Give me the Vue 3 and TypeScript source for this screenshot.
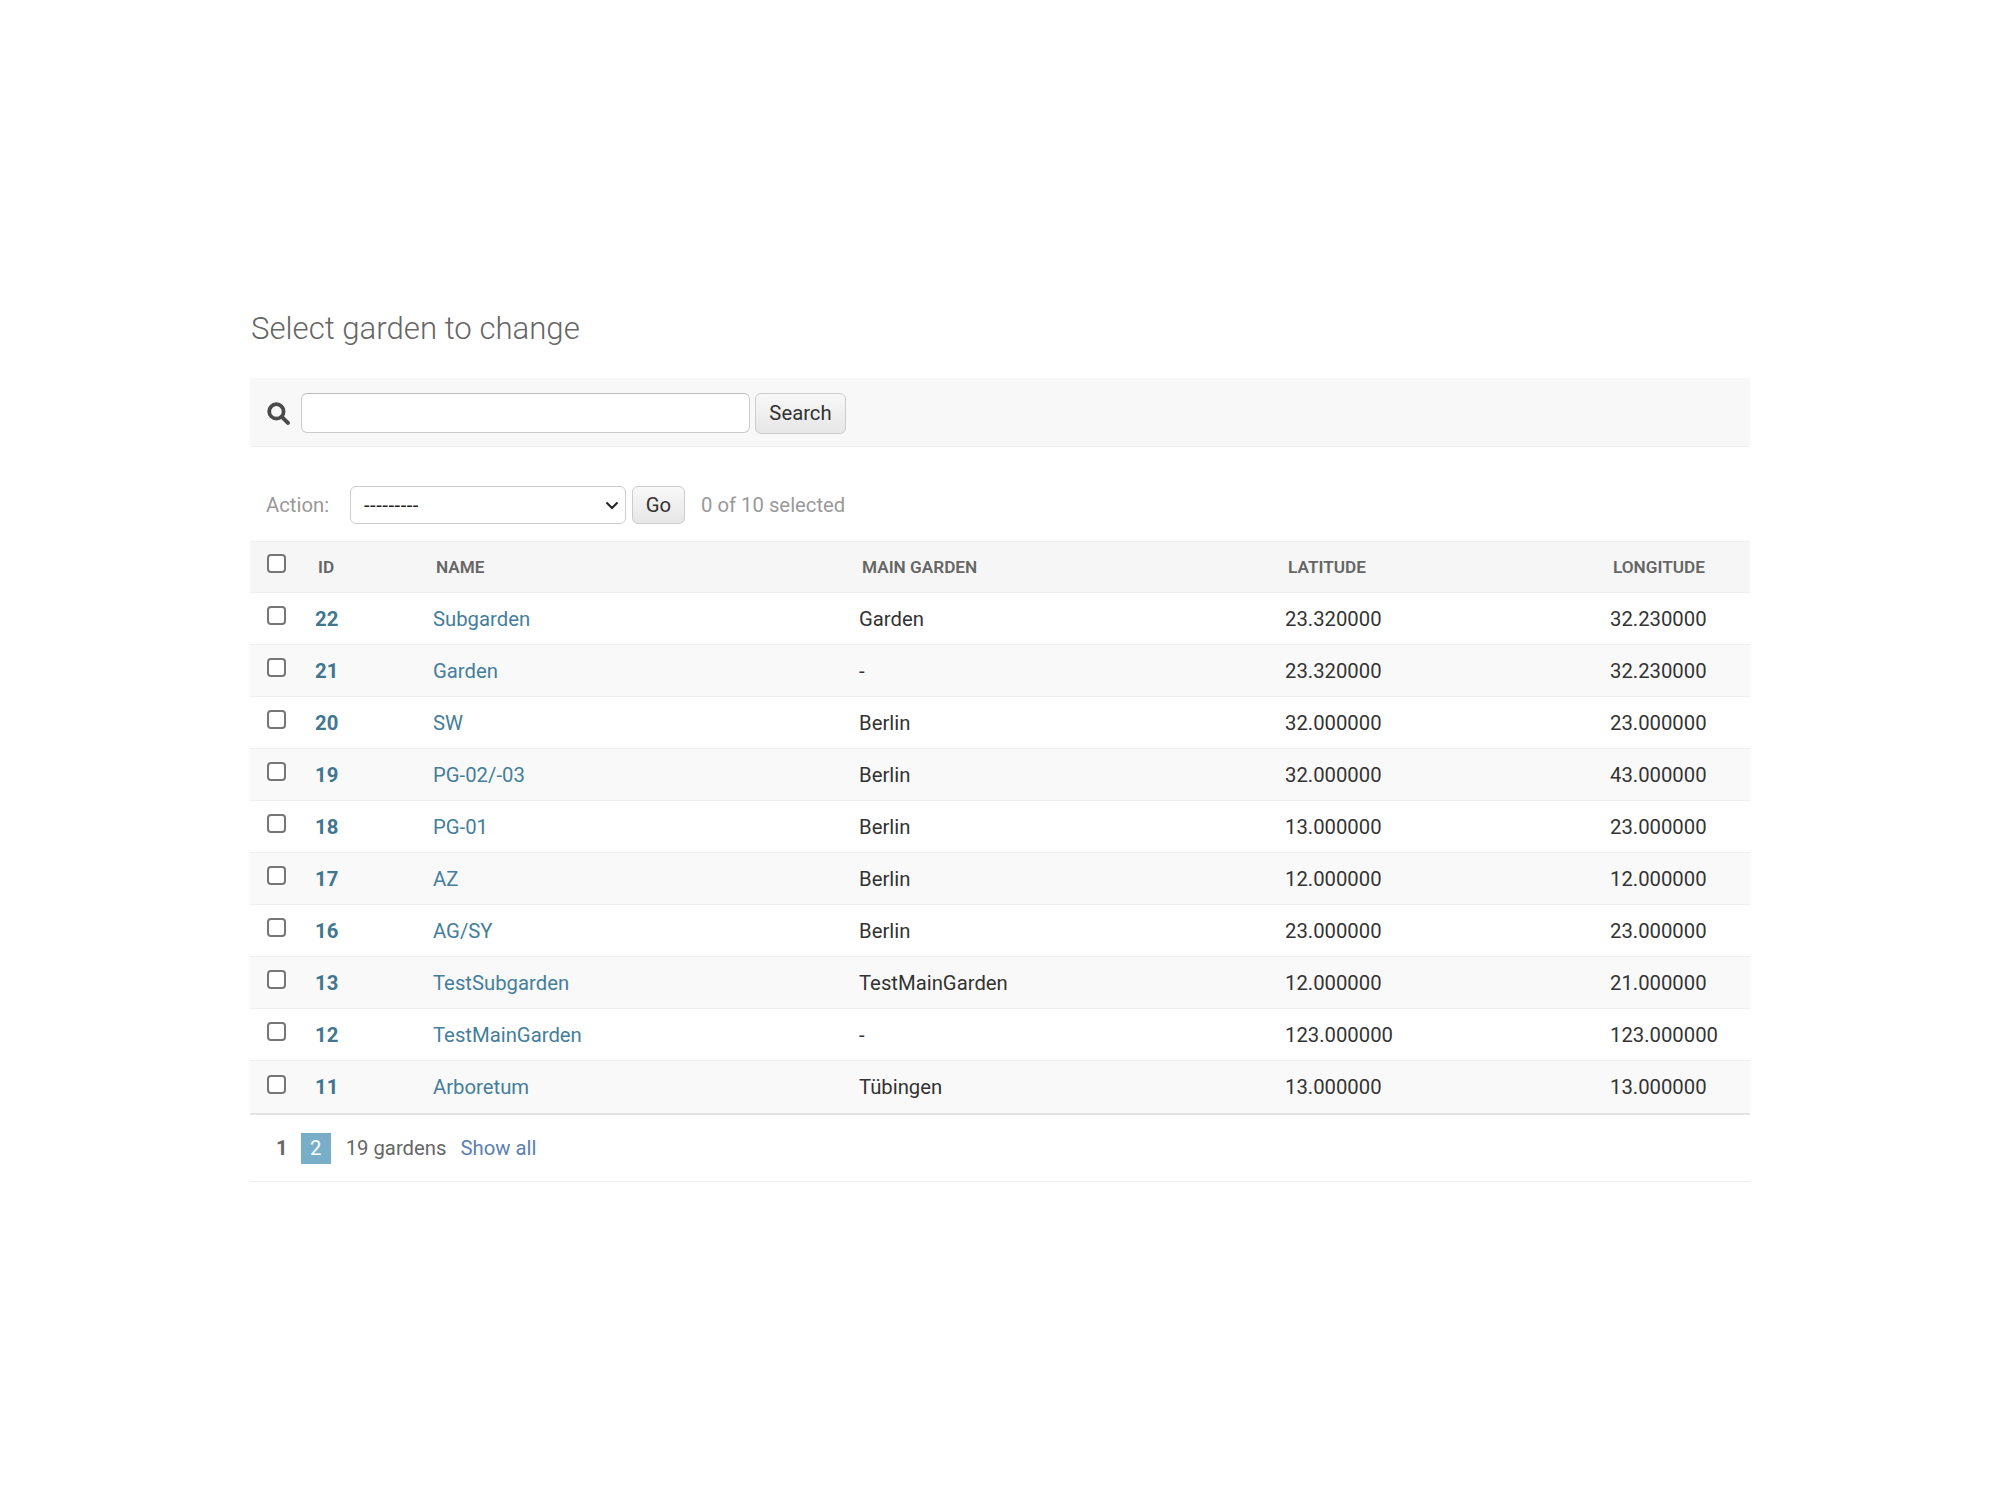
<script setup lang="ts">
interface Garden {
  id: number
  name: string
  main: string
  lat: string
  lng: string
}

const gardens: Garden[] = [
  { id: 22, name: 'Subgarden', main: 'Garden', lat: '23.320000', lng: '32.230000' },
  { id: 21, name: 'Garden', main: '-', lat: '23.320000', lng: '32.230000' },
  { id: 20, name: 'SW', main: 'Berlin', lat: '32.000000', lng: '23.000000' },
  { id: 19, name: 'PG-02/-03', main: 'Berlin', lat: '32.000000', lng: '43.000000' },
  { id: 18, name: 'PG-01', main: 'Berlin', lat: '13.000000', lng: '23.000000' },
  { id: 17, name: 'AZ', main: 'Berlin', lat: '12.000000', lng: '12.000000' },
  { id: 16, name: 'AG/SY', main: 'Berlin', lat: '23.000000', lng: '23.000000' },
  { id: 13, name: 'TestSubgarden', main: 'TestMainGarden', lat: '12.000000', lng: '21.000000' },
  { id: 12, name: 'TestMainGarden', main: '-', lat: '123.000000', lng: '123.000000' },
  { id: 11, name: 'Arboretum', main: 'Tübingen', lat: '13.000000', lng: '13.000000' },
]
</script>

<template>
  <div class="page">
    <h1 class="title">Select garden to change</h1>

    <div class="toolbar">
      <svg class="search-icon" viewBox="0 0 22 22" aria-hidden="true">
        <circle cx="9" cy="9" r="6.9" fill="none" stroke="currentColor" stroke-width="3.6" />
        <path d="M14.2 14.2 L20 20" stroke="currentColor" stroke-width="3.8" stroke-linecap="round" />
      </svg>
      <input class="search-input" type="text" />
      <button class="btn search-btn" type="button">Search</button>
    </div>

    <div class="actions">
      <label class="action-label">Action:</label>
      <div class="select-wrap">
        <select class="action-select">
          <option>---------</option>
        </select>
        <svg class="select-arrow" viewBox="0 0 14 9" aria-hidden="true">
          <path d="M1.5 1.5 L7 7 L12.5 1.5" fill="none" stroke="currentColor" stroke-width="2" />
        </svg>
      </div>
      <button class="btn go-btn" type="button">Go</button>
      <span class="counter">0 of 10 selected</span>
    </div>

    <table class="results">
      <thead>
        <tr>
          <th class="col-check"><input class="check" type="checkbox" /></th>
          <th class="col-id">ID</th>
          <th class="col-name">NAME</th>
          <th class="col-main">MAIN GARDEN</th>
          <th class="col-lat">LATITUDE</th>
          <th class="col-lng">LONGITUDE</th>
        </tr>
      </thead>
      <tbody>
        <tr v-for="garden in gardens" :key="garden.id">
          <td><input class="check" type="checkbox" /></td>
          <td><a class="id-link">{{ garden.id }}</a></td>
          <td><a class="name-link">{{ garden.name }}</a></td>
          <td>{{ garden.main }}</td>
          <td>{{ garden.lat }}</td>
          <td>{{ garden.lng }}</td>
        </tr>
      </tbody>
    </table>

    <div class="paginator">
      <span class="page-plain">1</span>
      <span class="page-current">2</span>
      <span class="count">19 gardens</span>
      <a class="show-all">Show all</a>
    </div>
  </div>
</template>

<style>
html, body {
  margin: 0;
  background: #fff;
}
</style>

<style scoped>
.page {
  width: 1500px;
  margin-left: 250px;
  padding-top: 308px;
  font-family: Roboto, "Liberation Sans", sans-serif;
  font-size: 20.3px;
  color: #333;
}

.title {
  margin: 0 0 29px;
  padding-left: 1px;
  font-size: 31.15px;
  line-height: 41px;
  font-weight: 300;
  color: #666;
}

.toolbar {
  display: flex;
  align-items: center;
  height: 69px;
  box-sizing: border-box;
  padding: 2px 0 0 17px;
  background: #f8f8f8;
  border-bottom: 1px solid #eee;
}

.search-icon {
  width: 23px;
  height: 23px;
  margin-right: 11px;
  color: #4a4a4a;
}

.search-input {
  box-sizing: border-box;
  width: 449px;
  height: 40px;
  border: 1px solid #ccc;
  border-top-color: #bbb;
  border-radius: 6px;
  background: #fff;
}

.btn {
  box-sizing: border-box;
  margin-left: 5px;
  border: 1px solid #ccc;
  border-radius: 6px;
  background: linear-gradient(#f8f8f8, #e6e6e6);
  font-family: inherit;
  font-size: 20.3px;
  color: #333;
  padding: 0;
}

.search-btn {
  width: 91px;
  height: 41px;
}

.actions {
  display: flex;
  align-items: center;
  height: 94px;
  padding: 22px 0 0 16px;
  box-sizing: border-box;
}

.action-label {
  width: 84px;
  color: #999;
}

.select-wrap {
  position: relative;
  height: 38px;
}

.action-select {
  appearance: none;
  display: block;
  box-sizing: border-box;
  width: 276px;
  height: 38px;
  padding-left: 13px;
  border: 1px solid #ccc;
  border-radius: 6px;
  background: #fff;
  font-family: inherit;
  font-size: 20.3px;
  letter-spacing: 0.5px;
  color: #222;
}

.select-arrow {
  position: absolute;
  top: 15px;
  right: 7px;
  width: 14px;
  height: 9px;
  color: #222;
  pointer-events: none;
}

.go-btn {
  width: 53px;
  height: 38px;
  margin-left: 6px;
}

.counter {
  margin-left: 16px;
  color: #999;
}

.results {
  width: 1500px;
  table-layout: fixed;
  border-collapse: collapse;
}

.results th {
  box-sizing: border-box;
  height: 51px;
  padding: 0;
  text-align: left;
  font-size: 17.2px;
  font-weight: 600;
  color: #666;
  background: #f6f6f6;
  border-top: 1px solid #eee;
  border-bottom: 1px solid #eee;
}

.results th.col-check { width: 65px; padding-left: 17px; }
.results th.col-check .check { margin-top: -7px; }
.col-id { width: 118px; }
.col-name { width: 426px; }
.col-main { width: 426px; }
.col-lat { width: 325px; }

.results td {
  height: 51px;
  padding: 0;
  border-bottom: 1px solid #eee;
}

.results tbody tr:nth-child(even) td {
  background: #f9f9f9;
}

.results tbody td:first-child {
  padding-left: 17px;
}

.results tbody tr:last-child td {
  height: 52px;
  border-bottom: 2px solid #e2e2e2;
}

.results th:nth-child(n + 2) {
  padding-left: 3px;
}

.check {
  appearance: none;
  display: block;
  box-sizing: border-box;
  width: 19px;
  height: 19px;
  margin: -6px 0 0;
  border: 2px solid #767676;
  border-radius: 4px;
  background: #fff;
}

.id-link {
  font-weight: 700;
  color: #417690;
}

.name-link {
  color: #447e9b;
}

.paginator {
  display: flex;
  align-items: center;
  height: 67px;
  box-sizing: border-box;
  padding-left: 26px;
  border-bottom: 1px solid #eee;
  color: #666;
}

.page-plain {
  font-weight: 700;
  margin-right: 13px;
}

.page-current {
  display: block;
  width: 30px;
  height: 31px;
  line-height: 31px;
  text-align: center;
  background: #79aec8;
  color: #fff;
  margin-right: 15px;
}

.count {
  margin-right: 14px;
}

.show-all {
  color: #5b80b2;
}
</style>
